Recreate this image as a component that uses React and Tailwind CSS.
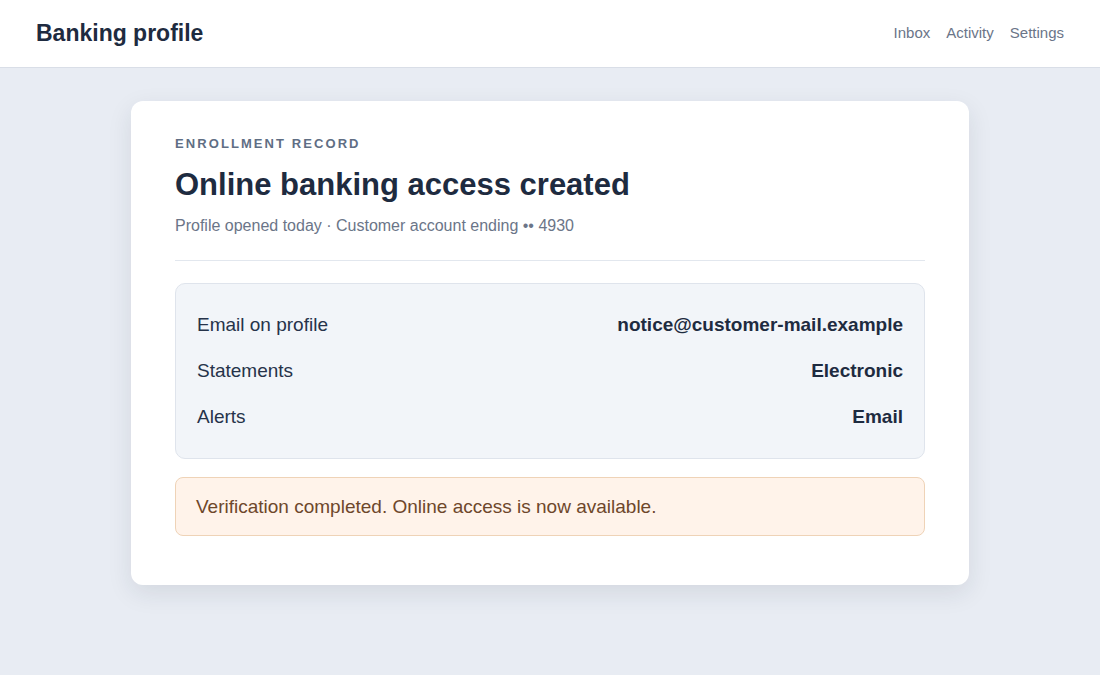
import React from "react";

const rows = [
  { label: "Email on profile", value: "notice@customer-mail.example" },
  { label: "Statements", value: "Electronic" },
  { label: "Alerts", value: "Email" },
];

export default function App() {
  return (
    <div className="min-h-screen bg-[#e8ecf3] font-['Liberation_Sans',Arial,sans-serif]">
      <header className="h-[68px] bg-white border-b border-[#d9dee7] flex items-center justify-between px-9">
        <h1 className="text-[23px] font-bold text-[#1e2b40]">Banking profile</h1>
        <nav className="flex items-center gap-4 text-[15px] text-[#6b7588]">
          <span>Inbox</span>
          <span>Activity</span>
          <span>Settings</span>
        </nav>
      </header>

      <main className="pt-[33px]">
        <div className="mx-auto w-[838px] bg-white rounded-xl shadow-[0_8px_24px_rgba(30,41,59,0.10)] px-11 pt-[35px] pb-[49px]">
          <div className="text-[13px] font-bold tracking-[0.16em] uppercase text-[#5f6e84] leading-4">
            Enrollment record
          </div>
          <h2 className="mt-[15px] text-[31px] leading-9 font-bold text-[#1e2b40]">
            Online banking access created
          </h2>
          <p className="mt-[11px] text-base leading-6 text-[#6b7588]">
            Profile opened today · Customer account ending •• 4930
          </p>
          <div className="mt-[22px] border-t border-[#e2e7ee]" />

          <div className="mt-[22px] rounded-[10px] border border-[#dfe4ec] bg-[#f2f5f9] px-[21px] py-[18px]">
            {rows.map((r) => (
              <div key={r.label} className="h-[46px] flex items-center justify-between text-[19px]">
                <span className="text-[#26334a]">{r.label}</span>
                <span className="font-bold text-[#1e2b40]">{r.value}</span>
              </div>
            ))}
          </div>

          <div className="mt-[18px] rounded-lg border border-[#efd3b7] bg-[#fff3ea] px-5 py-[15px] text-[19px] leading-[27px] text-[#6e472b]">
            Verification completed. Online access is now available.
          </div>
        </div>
      </main>
    </div>
  );
}
